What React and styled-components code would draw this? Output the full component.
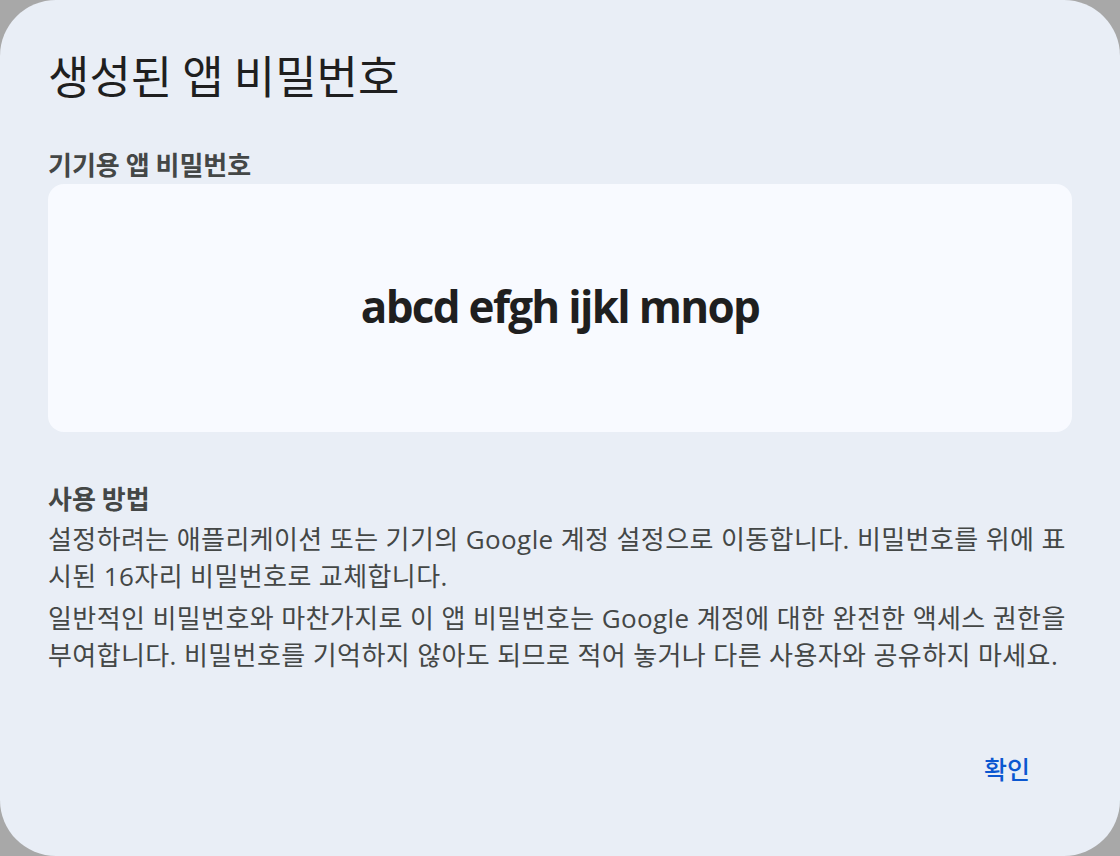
import React from 'react';
import styled, { createGlobalStyle } from 'styled-components';

const GlobalStyle = createGlobalStyle`
  html, body {
    margin: 0;
    padding: 0;
    background: #a8a8a8;
  }
  * {
    box-sizing: border-box;
  }
`;

const Dialog = styled.div`
  width: 1120px;
  height: 856px;
  border-radius: 56px;
  background: #e9eef6;
  padding: 48px 48px 64px;
  display: flex;
  flex-direction: column;
  font-family: "Open Sans", "Noto Sans CJK KR", sans-serif;
  color: #1f1f1f;
`;

const Title = styled.h1`
  margin: 0;
  font-family: "Noto Sans CJK KR", sans-serif;
  font-size: 45px;
  line-height: 54px;
  font-weight: 400;
  color: #1f1f1f;
`;

const Label = styled.h2`
  margin: ${(p) => p.$top}px 0 0;
  font-family: "Noto Sans CJK KR", sans-serif;
  font-size: 26px;
  line-height: ${(p) => p.$lh}px;
  font-weight: 700;
  color: #444746;
`;

const PasswordBox = styled.div`
  margin-top: 4px;
  height: 248px;
  border-radius: 16px;
  background: #f8faff;
  display: flex;
  align-items: center;
  justify-content: center;
`;

const Password = styled.span`
  font-family: "Open Sans", sans-serif;
  font-size: 44px;
  font-weight: 700;
  letter-spacing: -1.7px;
  color: #1f1f1f;
  margin-top: -4px;
`;

const Para = styled.p`
  margin: 5px 0 0;
  font-family: "Open Sans", "Noto Sans CJK KR", sans-serif;
  font-size: 26px;
  line-height: 37px;
  letter-spacing: 0.4px;
  color: #444746;
`;

const Footer = styled.div`
  margin-top: auto;
  display: flex;
  justify-content: flex-end;
  padding-right: 18px;
`;

const TextButton = styled.button`
  border: none;
  background: none;
  padding: 0 24px;
  height: 48px;
  border-radius: 24px;
  font-family: "Noto Sans CJK KR", sans-serif;
  font-size: 25px;
  font-weight: 500;
  color: #0b57d0;
  cursor: pointer;
`;

export default function App() {
  return (
    <>
      <GlobalStyle />
      <Dialog>
        <Title>생성된 앱 비밀번호</Title>
        <Label $top={46} $lh={32}>기기용 앱 비밀번호</Label>
        <PasswordBox>
          <Password>abcd efgh ijkl mnop</Password>
        </PasswordBox>
        <Label $top={48} $lh={36}>사용 방법</Label>
        <Para>
          설정하려는 애플리케이션 또는 기기의 Google 계정 설정으로 이동합니다. 비밀번호를 위에 표시된 16자리 비밀번호로 교체합니다.
        </Para>
        <Para>
          일반적인 비밀번호와 마찬가지로 이 앱 비밀번호는 Google 계정에 대한 완전한 액세스 권한을 부여합니다. 비밀번호를 기억하지 않아도 되므로 적어 놓거나 다른 사용자와 공유하지 마세요.
        </Para>
        <Footer>
          <TextButton>확인</TextButton>
        </Footer>
      </Dialog>
    </>
  );
}
